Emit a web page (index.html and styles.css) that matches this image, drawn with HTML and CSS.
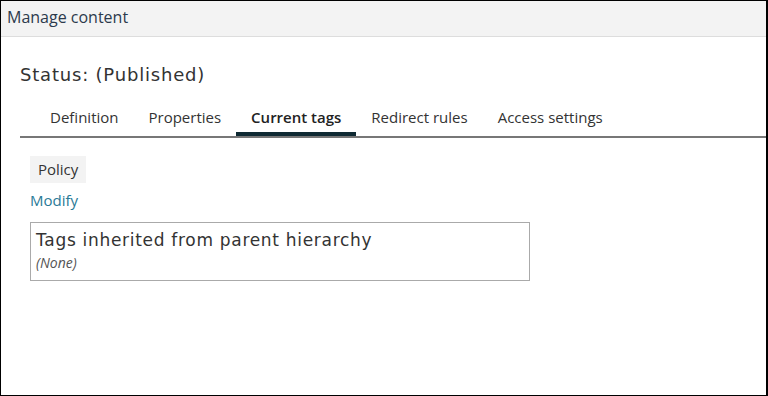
FILE: index.html
```html
<html>

<head>
    <title>Manage content</title>
    <link rel="stylesheet" href="styles.css">
</head>

<body>
    <div class="frame">
        <div class="header">Manage content</div>
        <div class="main">
            <div class="status">Status: (Published)</div>
            <div class="tabs">
                <div class="tab">Definition</div>
                <div class="tab">Properties</div>
                <div class="tab active">Current tags</div>
                <div class="tab">Redirect rules</div>
                <div class="tab">Access settings</div>
            </div>
            <div class="tab_body">
                <div class="chip">Policy</div>
                <a class="link" href="#">Modify</a>
                <div class="inherited">
                    <div class="inherited_title">Tags inherited from parent hierarchy</div>
                    <div class="none">(None)</div>
                </div>
            </div>
        </div>
    </div>
</body>

</html>
```

FILE: styles.css
```css
body {
    margin: 0;
    font-family: "Open Sans", sans-serif;
    color: #333;
    background-color: #fff;
}

.frame {
    width: 768px;
    height: 396px;
    box-sizing: border-box;
    border: 1px solid #000;
    border-right-width: 2px;
    overflow: hidden;
}

.header {
    height: 35px;
    background-color: #f3f3f3;
    border-bottom: 1px solid #ddd;
    padding-left: 6px;
    font-size: 16px;
    line-height: 32px;
    color: #2c3a4c;
}

.main {
    padding-left: 19px;
}

.status {
    font-family: "DejaVu Sans", sans-serif;
    font-size: 18px;
    letter-spacing: 0.8px;
    margin-top: 26px;
    line-height: 24px;
    color: #333;
}

.tabs {
    display: flex;
    margin-top: 15px;
    padding-left: 15px;
    border-bottom: 2px solid #777;
}

.tab {
    padding: 0 15px;
    font-size: 15px;
    line-height: 30px;
    border-bottom: 4px solid transparent;
}

.tab.active {
    font-weight: 600;
    color: #222;
    border-bottom-color: #0f2a33;
}

.tab_body {
    padding: 18px 0 0 10px;
}

.chip {
    display: inline-block;
    background-color: #f3f3f3;
    padding: 2px 8px;
    font-size: 15px;
    line-height: 23px;
}

.link {
    display: block;
    margin-top: 6px;
    font-size: 15px;
    line-height: 22px;
    color: #2a7a97;
    text-decoration: none;
}

.inherited {
    width: 488px;
    margin-top: 11px;
    border: 1px solid #aaa;
    padding: 5px 5px 7px 5px;
}

.inherited_title {
    font-family: "DejaVu Sans", sans-serif;
    font-size: 17px;
    letter-spacing: 0.7px;
    line-height: 25px;
}

.none {
    font-size: 14px;
    font-style: italic;
    color: #555;
    line-height: 20px;
}
```
